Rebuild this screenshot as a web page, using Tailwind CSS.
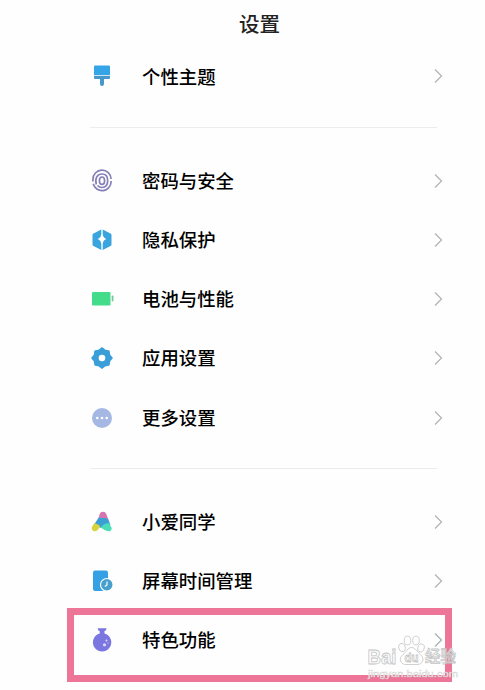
<!doctype html>
<html lang="zh-CN">

<head>
  <meta charset="utf-8">
  <meta name="viewport" content="width=device-width, initial-scale=1">
  <title>设置</title>
  <script src="https://cdn.jsdelivr.net/npm/@tailwindcss/browser@4"></script>
</head>

<body class="relative h-[690px] overflow-hidden bg-[#fefefe] font-['Noto_Sans_CJK_SC',sans-serif] text-black">
<header class="flex h-[46.6px] items-center pl-[239px]">
  <h1 class="pb-px text-[20.5px] leading-none font-medium text-[#222]">设置</h1>
</header>

<main class="pr-[42px] pl-[90px] text-[18.4px] leading-none font-medium">
  <ul>
    <li class="flex h-[59.2px] items-center">
      <svg class="size-6 shrink-0" viewBox="0 0 24 24">
        <path fill="#36a5e8" d="M5 1.500h14a1 1 0 0 1 1 1V11H4V2.500a1 1 0 0 1 1-1z" />
        <path fill="#4699c8" d="M4 11.700h16V14a1 1 0 0 1-1 1h-5v5a2 2 0 0 1-4 0v-5H5a1 1 0 0 1-1-1z" />
      </svg>
      <span class="ml-7 flex-1">个性主题</span>
      <svg class="h-4 w-[9px]" viewBox="0 0 9 16" fill="none" stroke="#b4b4b4" stroke-width="1.3"><path d="M1 1.500 7.500 8 1 14.500" /></svg>
    </li>
  </ul>

  <hr class="mt-[21.4px] mb-[23px] w-[347px] border-[#ececec]">

  <ul>
    <li class="flex h-[59.2px] items-center">
      <!-- Fingerprint -->
      <svg class="size-6 shrink-0" viewBox="0 0 24 24" fill="none" stroke="#8780b8" stroke-width="1.700">
        <path d="M2.900 12.500v-2a9.100 9.100 0 0 1 18.200-.5M21.100 12v1a9.100 9.100 0 0 1-17.900 1.800" />
        <path d="M6.300 15.500C4.500 9 7.500 5 12 5c3.500 0 5.700 2.500 5.700 6.500 0 4.500-2 7-5.700 7-2 0-3.500-.8-4.500-2" />
        <ellipse cx="12" cy="11.700" rx="2.600" ry="3.700" />
      </svg>
      <span class="ml-7 flex-1 pb-[1.500px]">密码与安全</span>
      <svg class="h-4 w-[9px]" viewBox="0 0 9 16" fill="none" stroke="#b4b4b4" stroke-width="1.3"><path d="M1 1.500 7.500 8 1 14.500" /></svg>
    </li>
    <li class="flex h-[59.2px] items-center">
      <svg class="size-6 shrink-0" viewBox="0 0 24 24">
        <path fill="#39a4de" d="M11.300 1.500v4.500C10.800 9 10 10 7.500 11c2.500 1 3.300 2 3.800 5v6L3.500 18a1.500 1.500 0 0 1-1-1.400V7a1.500 1.500 0 0 1 1-1.400z" />
        <path fill="#39a4de" d="M12.700 1.500v4.500c.5 3 1.300 4 3.800 5-2.500 1-3.300 2-3.800 5v6l7.800-4a1.500 1.500 0 0 0 1-1.400V7a1.500 1.500 0 0 0-1-1.400z" />
      </svg>
      <span class="ml-7 flex-1 pb-[1.500px]">隐私保护</span>
      <svg class="h-4 w-[9px]" viewBox="0 0 9 16" fill="none" stroke="#b4b4b4" stroke-width="1.3"><path d="M1 1.500 7.500 8 1 14.500" /></svg>
    </li>
    <li class="flex h-[59.2px] items-center">
      <svg class="size-6 shrink-0" viewBox="0 0 24 24">
        <rect x="2" y="5" width="18.500" height="13.500" rx="1.300" fill="#43dc8b" />
        <rect x="21.700" y="8.500" width="1.700" height="6" rx=".8" fill="#74c79c" />
      </svg>
      <span class="ml-7 flex-1 pb-[1.500px]">电池与性能</span>
      <svg class="h-4 w-[9px]" viewBox="0 0 9 16" fill="none" stroke="#b4b4b4" stroke-width="1.3"><path d="M1 1.500 7.500 8 1 14.500" /></svg>
    </li>
    <li class="flex h-[59.2px] items-center">
      <svg class="size-6 shrink-0" viewBox="0 0 24 24">
        <path fill="#3a9fd8" stroke="#3a9fd8" stroke-width="2.500" stroke-linejoin="round" d="m12 2.500 2.700 2.200 3.800.8.600 3.800L21.500 12l-2.400 2.700-.6 3.800-3.800.8-2.700 2.200-2.700-2.200-3.800-.8-.6-3.800L2.500 12l2.400-2.700.6-3.800 3.800-.8z" />
        <circle cx="12" cy="12" r="3.300" fill="#fff" />
      </svg>
      <span class="ml-7 flex-1 pb-[1.500px]">应用设置</span>
      <svg class="h-4 w-[9px]" viewBox="0 0 9 16" fill="none" stroke="#b4b4b4" stroke-width="1.3"><path d="M1 1.500 7.500 8 1 14.500" /></svg>
    </li>
    <li class="flex h-[59.2px] items-center">
      <svg class="size-6 shrink-0" viewBox="0 0 24 24">
        <circle cx="12" cy="12" r="10" fill="#a5b8e3" />
        <g fill="#fff"><circle cx="7.300" cy="12" r="1.300" /><circle cx="12" cy="12" r="1.300" /><circle cx="16.700" cy="12" r="1.300" /></g>
      </svg>
      <span class="ml-7 flex-1 pb-px">更多设置</span>
      <svg class="h-4 w-[9px]" viewBox="0 0 9 16" fill="none" stroke="#b4b4b4" stroke-width="1.3"><path d="M1 1.500 7.500 8 1 14.500" /></svg>
    </li>
  </ul>

  <hr class="mt-[21px] mb-[23px] w-[347px] border-[#ececec]">

  <ul>
    <li class="flex h-[59.2px] items-center">
      <svg class="size-6 shrink-0" viewBox="0 0 24 24">
        <path fill="#d575b0" d="M8.500 8.500 9.700 4a3.500 3.500 0 0 1 6.600 0l2 5.500z" />
        <path fill="#3b9fd4" d="M8.700 7.500c3 1 7 0 9.500 1.500l2.300 6c-4-1.500-6 .5-9 3L3.500 15.500z" />
        <path fill="#d8d23c" d="M4.500 13c2 1 4 1.500 5.500 3-1 2.500-2.500 5.200-5 5.200-3 0-4-2.700-2.700-5z" />
        <path fill="#4bdcb8" d="M10.500 17.500c2-2.300 4.500-4 8.200-4.500l2.600 4.200c1 2.200-.3 4-2.600 4-3.200 0-5-2.200-8.200-3.700z" />
      </svg>
      <span class="ml-7 flex-1 pb-[1.500px]">小爱同学</span>
      <svg class="h-4 w-[9px]" viewBox="0 0 9 16" fill="none" stroke="#b4b4b4" stroke-width="1.3"><path d="M1 1.500 7.500 8 1 14.500" /></svg>
    </li>
    <li class="flex h-[59.2px] items-center">
      <svg class="size-6 shrink-0" viewBox="0 0 24 24">
        <rect x="3" y="1.500" width="15" height="20.500" rx="2" fill="#35a1e4" />
        <circle cx="16.800" cy="15.800" r="6.300" fill="#469fcd" stroke="#fff" stroke-width="1.200" />
        <path d="M17 12.500v3.500l-2.200 1.500" fill="none" stroke="#fff" stroke-width="1.200" />
      </svg>
      <span class="ml-7 flex-1 pb-[1.500px]">屏幕时间管理</span>
      <svg class="h-4 w-[9px]" viewBox="0 0 9 16" fill="none" stroke="#b4b4b4" stroke-width="1.3"><path d="M1 1.500 7.500 8 1 14.500" /></svg>
    </li>
    <li class="flex h-[59.2px] items-center">
      <!-- Flask -->
      <svg class="size-6 shrink-0" viewBox="0 0 24 24">
        <path fill="#7c76e0" d="M7.800.3h8.600c.2 1.500-.6 2.200-1.900 2.700v2.400a9.200 9.200 0 1 1-4.800 0V3C8.400 2.500 7.600 1.800 7.800.3z" />
        <g fill="#dcdafa"><circle cx="16.500" cy="12.500" r="1" /><circle cx="14.500" cy="16.800" r="1.600" /><circle cx="18" cy="15" r=".6" /></g>
      </svg>
      <span class="ml-7 flex-1 pb-px">特色功能</span>
      <svg class="h-4 w-[9px]" viewBox="0 0 9 16" fill="none" stroke="#a2b5ae" stroke-width="1.3"><path d="M1 1.500 7.500 8 1 14.500" /></svg>
    </li>
  </ul>
</main>

<!-- Highlight frame -->
<div class="absolute top-[608px] left-[67px] h-[74px] w-[385px] border-7 border-[#ec7598]"></div>

<!-- Watermark -->
<svg class="absolute top-[630px] left-[360px] h-[60px] w-[110px]" viewBox="0 0 110 60" fill="#fff" fill-opacity=".75" stroke="#c4c4c4" stroke-width=".8">
  <text x="7.500" y="33.500" font-family="Liberation Sans" font-size="20" textLength="29" lengthAdjust="spacingAndGlyphs" font-weight="700">Bai</text>
  <ellipse cx="42" cy="17.500" rx="3.200" ry="4" transform="rotate(-15 42 17.500)" />
  <ellipse cx="47.500" cy="10.500" rx="3.300" ry="4.400" />
  <ellipse cx="56" cy="10.500" rx="3.300" ry="4.400" />
  <ellipse cx="61" cy="18" rx="3.200" ry="4" transform="rotate(15 61 18)" />
  <path d="M51.500 17.500c-4 0-5 4.500-8.500 7-5 4-2.500 10 3 10h11c6 0 8-6 3.500-10-3.500-2.500-5-7-9-7z" />
  <text x="44.500" y="32" font-family="Liberation Sans" font-size="12" font-weight="700" textLength="14" lengthAdjust="spacingAndGlyphs">du</text>
  <text x="65" y="32" font-family="Noto Sans CJK SC" font-size="15.500" font-weight="500" textLength="31">经验</text>
  <text x="8" y="46.500" font-family="Liberation Sans" font-size="9" fill-opacity=".9" stroke="#d2d2d2" stroke-width=".4" textLength="90" lengthAdjust="spacingAndGlyphs">jingyan.baidu.com</text>
</svg>
</body>

</html>
